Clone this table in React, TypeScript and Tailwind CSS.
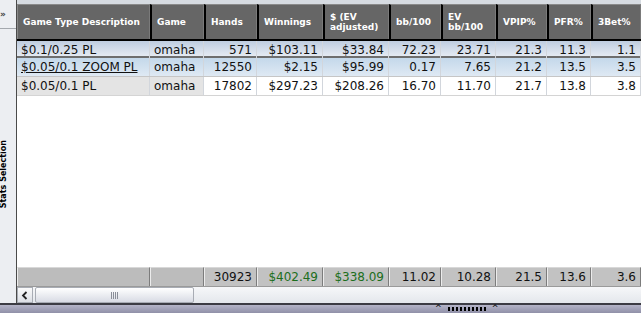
import React from "react";

type Row = {
  desc: string;
  game: string;
  hands: string;
  win: string;
  ev: string;
  bb: string;
  evbb: string;
  vpip: string;
  pfr: string;
  tb: string;
  winGreen?: boolean;
  evGreen?: boolean;
};

const rows: Row[] = [
  { desc: "$0.1/0.25 PL", game: "omaha", hands: "571", win: "$103.11", ev: "$33.84", bb: "72.23", evbb: "23.71", vpip: "21.3", pfr: "11.3", tb: "1.1" },
  { desc: "$0.05/0.1 ZOOM PL", game: "omaha", hands: "12550", win: "$2.15", ev: "$95.99", bb: "0.17", evbb: "7.65", vpip: "21.2", pfr: "13.5", tb: "3.5", winGreen: true, evGreen: true },
  { desc: "$0.05/0.1 PL", game: "omaha", hands: "17802", win: "$297.23", ev: "$208.26", bb: "16.70", evbb: "11.70", vpip: "21.7", pfr: "13.8", tb: "3.8", winGreen: true, evGreen: true },
];

const cols = "grid grid-cols-[133px_54px_53px_66px_66px_52px_55px_51px_44px_50px]";

function Header() {
  const heads = ["Game Type Description", "Game", "Hands", "Winnings", "$ (EV\nadjusted)", "bb/100", "EV\nbb/100", "VPIP%", "PFR%", "3Bet%"];
  return (
    <div className={`${cols} h-[37px] bg-[#666666] border-b-2 border-black`}>
      {heads.map((h, i) => (
        <div
          key={i}
          className={`flex items-center px-[5px] text-white font-bold text-[9px] leading-[10px] whitespace-pre border-t border-[#8a8a8a] ${
            i === 0 ? "border-l border-l-[#8a8a8a]" : "border-l-2 border-l-black"
          } border-r border-r-[#7a7a7a]`}
        >
          {h}
        </div>
      ))}
    </div>
  );
}

function DataRow({ r, idx }: { r: Row; idx: number }) {
  const rowBg =
    idx === 0
      ? "bg-gradient-to-b from-[#bfcde0] to-[#e4eaf2] border-b-2 border-[#6e6e6e]"
      : idx === 1
      ? "bg-gradient-to-b from-[#c4d8ea] to-[#dfe9f3] border-b border-[#c6c6c6]"
      : "bg-white border-b border-[#d4d4d4]";
  const h = idx === 0 ? "h-[17px]" : "h-[19px]";
  const textCell = idx === 2 ? "bg-[#e4e4e4]" : "";
  const cell = "flex items-center border-r border-[#d2d6dc] px-[4px] text-[12px] text-[#111]";
  const green = "text-[#1c6e1c]";
  return (
    <div className={`${cols} ${h} ${rowBg}`}>
      <div className={`${cell} ${textCell} ${idx === 1 ? "underline" : ""}`}>{r.desc}</div>
      <div className={`${cell} ${textCell}`}>{r.game}</div>
      <div className={`${cell} justify-end`}>{r.hands}</div>
      <div className={`${cell} justify-end ${r.winGreen ? green : ""}`}>{r.win}</div>
      <div className={`${cell} justify-end ${r.evGreen ? green : ""}`}>{r.ev}</div>
      <div className={`${cell} justify-end`}>{r.bb}</div>
      <div className={`${cell} justify-end`}>{r.evbb}</div>
      <div className={`${cell} justify-end`}>{r.vpip}</div>
      <div className={`${cell} justify-end`}>{r.pfr}</div>
      <div className={`${cell} justify-end`}>{r.tb}</div>
    </div>
  );
}

function Totals() {
  const vals = ["", "", "30923", "$402.49", "$338.09", "11.02", "10.28", "21.5", "13.6", "3.6"];
  return (
    <div className={`${cols} h-[19px] bg-[#c2c2c2]`}>
      {vals.map((v, i) => (
        <div
          key={i}
          className={`flex items-center justify-end px-[4px] text-[12px] border-l border-l-[#ececec] border-r border-r-[#7c7c7c] border-t border-t-[#d8d8d8] ${
            i === 3 || i === 4 ? "text-[#1c6e1c]" : "text-[#111]"
          } ${i < 2 ? "bg-[#bcbcbc]" : ""}`}
        >
          {v}
        </div>
      ))}
    </div>
  );
}

function HScroll() {
  return (
    <div className="flex h-[17px] bg-gradient-to-b from-[#f6f7f9] to-[#e4e7ec] border-t border-[#9a9a9a]">
      <div className="w-[16px] flex items-center justify-center bg-gradient-to-b from-[#fafafa] to-[#dcdfe5] border border-[#a8acb4]">
        <svg width="8" height="9" viewBox="0 0 8 9">
          <path d="M5.5 1 L2 4.5 L5.5 8" stroke="#222" strokeWidth="1.8" fill="none" />
        </svg>
      </div>
      <div className="ml-[2px] w-[159px] flex items-center justify-center bg-gradient-to-b from-[#ffffff] to-[#d8dbe4] border border-[#a8acb4] rounded-[2px]">
        <div className="flex gap-[1px]">
          {[0, 1, 2, 3].map((i) => (
            <div key={i} className="w-[1px] h-[7px] bg-[#8a8e98]" />
          ))}
        </div>
      </div>
      <div className="flex-1" />
    </div>
  );
}

export default function App() {
  return (
    <div className="w-[641px] h-[313px] flex flex-col bg-white overflow-hidden [font-family:'DejaVu_Sans',sans-serif]">
      <div className="flex h-[303px]">
        {/* side panel */}
        <div className="w-[17px] flex flex-col bg-[#eceef2] border-r border-[#4a4a4a] overflow-hidden">
          <div className="h-[29px] border-b border-[#a4a8ae] flex items-center">
            <span className="ml-0 text-[9px] font-bold text-[#444] leading-none">»</span>
          </div>
          <div className="flex-1 flex items-center pt-[16px]">
            <span className="ml-0 [writing-mode:vertical-rl] rotate-180 text-[8px] font-bold text-black leading-none">
              Stats Selection
            </span>
          </div>
        </div>
        {/* table */}
        <div className="flex-1 flex flex-col">
          <div className="h-[4px] bg-[#d6dbe1]" />
          <Header />
          {rows.map((r, i) => (
            <DataRow key={i} r={r} idx={i} />
          ))}
          <div className="flex-1 bg-white" />
          <Totals />
          <HScroll />
        </div>
      </div>
      <div className="h-[2px] bg-[#3c3c44]" />
      <div className="flex-1 bg-gradient-to-b from-[#b4b4c8] to-[#9090a8] flex items-center justify-start pl-[435px] gap-[6px]">
        <span className="text-[8px] leading-none text-black">^</span>
        <div className="flex gap-[2px]">
          {[0, 1, 2, 3, 4, 5, 6, 7, 8, 9].map((i) => (
            <div key={i} className="w-[2px] h-[4px] bg-black" />
          ))}
        </div>
        <span className="text-[8px] leading-none text-black">^</span>
      </div>
    </div>
  );
}
